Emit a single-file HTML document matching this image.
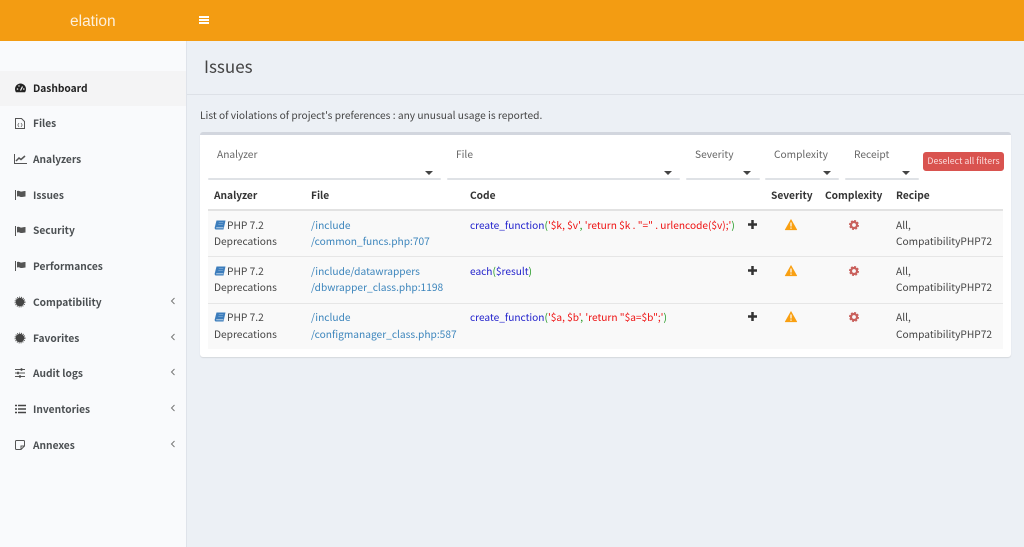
<!DOCTYPE html>
<html><head><meta charset="utf-8"><style>
html,body{margin:0;padding:0;width:1024px;height:547px;overflow:hidden;background:#ecf0f5;}
#o{position:absolute;left:0;top:0;width:1024px;height:547px;overflow:hidden;}
#w{position:absolute;left:0;top:0;width:1024px;height:547px;filter:blur(.35px);font-family:"Noto Sans CJK JP","Liberation Sans",sans-serif;font-size:10.2px;color:#444;}
.a{position:absolute;white-space:nowrap;line-height:16px;}
.b{position:absolute;}
.n{font-weight:700;color:#4b4f52;left:33px;}
.h{font-weight:700;color:#333;}
.l{color:#3c85bc;}
.g{color:#666;}
.c{font-size:10.15px;}
svg{position:absolute;overflow:visible;}
.sel{position:absolute;top:178px;height:2px;background:#dfe2e6;border-radius:2px;}
.car{position:absolute;top:171px;width:0;height:0;border-left:4px solid transparent;border-right:4px solid transparent;border-top:4px solid #444;}
.bl{color:#2222cc}.gr{color:#229922}.rd{color:#ee1111}
.rl{position:absolute;left:208px;width:795px;height:1px;background:#e6e6e6;}
</style></head><body><div id="o"><div id="w">
<div class="b" style="left:-2px;top:-2px;width:1028px;height:42.5px;background:#f39c12;"></div>
<div class="a" style="left:70px;top:13px;font-family:'Liberation Sans',sans-serif;font-size:15.5px;color:#fff;opacity:.85;line-height:18px;">elation</div>
<div class="b" style="left:199px;top:16px;width:10px;height:2px;background:#fff;"></div>
<div class="b" style="left:199px;top:19px;width:10px;height:2px;background:#fff;"></div>
<div class="b" style="left:199px;top:22px;width:10px;height:2px;background:#fff;"></div>

<div class="b" style="left:-2px;top:41px;width:188px;height:508px;background:#f9fafc;border-right:1px solid #dfe3ea;"></div>
<div class="b" style="left:-2px;top:71px;width:188px;height:35px;background:#f4f4f5;"></div>

<svg style="left:15px;top:83px" width="11" height="10" viewBox="0 0 11 10"><path d="M5.5 0.5C2.500 0.5 0 3 0 6c0 1.300.4 2.400 1 3.300h9c.6-.9 1-2 1-3.300C11 3 8.500.5 5.500.5z" fill="#222"/><path d="M5.500 7.500L7.500 3.500" stroke="#f4f4f5" stroke-width="1.200"/><circle cx="2.500" cy="6" r=".8" fill="#f4f4f5"/><circle cx="8.800" cy="6" r=".8" fill="#f4f4f5"/><circle cx="4" cy="3" r=".7" fill="#f4f4f5"/></svg>
<div class="a n" style="top:80px;color:#222;">Dashboard</div>

<svg style="left:15px;top:118px" width="10" height="11" viewBox="0 0 10 11"><path d="M.5.500h6l3 3v7h-9z" fill="none" stroke="#555" stroke-width="1"/><path d="M4 5L2.800 7 4 9M6 5l1.200 2L6 9" fill="none" stroke="#555" stroke-width=".7"/></svg>
<div class="a n" style="top:115px;">Files</div>

<svg style="left:14px;top:154px" width="13" height="10" viewBox="0 0 13 10"><path d="M.5 0v9.500H13" fill="none" stroke="#555"/><path d="M2 7l3-3 2 1.500L11 2" fill="none" stroke="#555" stroke-width="1.500"/></svg>
<div class="a n" style="top:151px;">Analyzers</div>

<svg style="left:15px;top:190px" width="11" height="10" viewBox="0 0 11 10"><path d="M.5 0v10" stroke="#555"/><path d="M2 1c2-1 3 1 5 .5 1.500-.3 2.500-.5 3.500-.5v5.500c-1.500 0-2 .5-3.500.5C5 7.300 4 5.500 2 6.500z" fill="#555"/></svg>
<div class="a n" style="top:187px;">Issues</div>

<svg style="left:15px;top:226px" width="11" height="10" viewBox="0 0 11 10"><path d="M.5 0v10" stroke="#555"/><path d="M2 1c2-1 3 1 5 .5 1.500-.3 2.500-.5 3.500-.5v5.500c-1.500 0-2 .5-3.500.5C5 7.300 4 5.500 2 6.500z" fill="#555"/></svg>
<div class="a n" style="top:222px;">Security</div>

<svg style="left:15px;top:261px" width="11" height="10" viewBox="0 0 11 10"><path d="M.5 0v10" stroke="#555"/><path d="M2 1c2-1 3 1 5 .5 1.500-.3 2.500-.5 3.500-.5v5.500c-1.500 0-2 .5-3.500.5C5 7.300 4 5.500 2 6.500z" fill="#555"/></svg>
<div class="a n" style="top:258px;">Performances</div>

<svg style="left:15px;top:297px" width="10" height="10" viewBox="0 0 10 10"><circle cx="5" cy="5" r="4.300" fill="#444"/><circle cx="5" cy="5" r="4.900" fill="none" stroke="#444" stroke-dasharray="1 1"/></svg>
<div class="a n" style="top:294px;">Compatibility</div>
<svg style="left:15px;top:333px" width="10" height="10" viewBox="0 0 10 10"><circle cx="5" cy="5" r="4.300" fill="#444"/><circle cx="5" cy="5" r="4.900" fill="none" stroke="#444" stroke-dasharray="1 1"/></svg>
<div class="a n" style="top:330px;">Favorites</div>

<svg style="left:15px;top:368px" width="10" height="10" viewBox="0 0 10 10"><path d="M0 1.500h10M0 5h10M0 8.500h10" stroke="#555"/><path d="M6.500.300v2.400M3 3.800v2.400M5 7.300v2.400" stroke="#444" stroke-width="1.600"/></svg>
<div class="a n" style="top:365px;">Audit logs</div>

<svg style="left:15px;top:404px" width="11" height="10" viewBox="0 0 11 10"><path d="M3 1.500h8M3 5h8M3 8.500h8" stroke="#444" stroke-width="1.500"/><path d="M0 1.500h2M0 5h2M0 8.500h2" stroke="#444" stroke-width="1.500"/></svg>
<div class="a n" style="top:401px;">Inventories</div>

<svg style="left:15px;top:440px" width="10" height="10" viewBox="0 0 10 10"><path d="M.5 1.500q0-1 1-1h7q1 0 1 1V6L6 9.500H1.500q-1 0-1-1z" fill="none" stroke="#555"/><path d="M6 9.500V6h3.500" fill="none" stroke="#555"/></svg>
<div class="a n" style="top:437px;">Annexes</div>

<svg style="left:170px;top:297px" width="6" height="8"><path d="M4.500 1L1.500 4l3 3" fill="none" stroke="#777"/></svg>
<svg style="left:170px;top:333px" width="6" height="8"><path d="M4.500 1L1.500 4l3 3" fill="none" stroke="#777"/></svg>
<svg style="left:170px;top:368px" width="6" height="8"><path d="M4.500 1L1.500 4l3 3" fill="none" stroke="#777"/></svg>
<svg style="left:170px;top:404px" width="6" height="8"><path d="M4.500 1L1.500 4l3 3" fill="none" stroke="#777"/></svg>
<svg style="left:170px;top:440px" width="6" height="8"><path d="M4.500 1L1.500 4l3 3" fill="none" stroke="#777"/></svg>

<div class="a" style="left:204px;top:53px;font-size:17px;line-height:26px;color:#444;">Issues</div>
<div class="b" style="left:187px;top:94px;width:839px;height:1px;background:#dde1e7;"></div>
<div class="a" style="left:200px;top:107px;color:#444;">List of violations of project's preferences : any unusual usage is reported.</div>

<div class="b" style="left:200px;top:132px;width:811px;height:225px;background:#fff;border-radius:3px;border-top:3px solid #d2d6de;box-sizing:border-box;box-shadow:0 1px 1px rgba(0,0,0,.1);"></div>

<div class="a g" style="left:217px;top:146px;">Analyzer</div>
<div class="a g" style="left:456px;top:146px;">File</div>
<div class="a g" style="left:695px;top:146px;">Severity</div>
<div class="a g" style="left:774px;top:146px;">Complexity</div>
<div class="a g" style="left:854px;top:146px;">Receipt</div>
<div class="sel" style="left:208px;width:233px;"></div><div class="car" style="left:425px;"></div>
<div class="sel" style="left:447px;width:233px;"></div><div class="car" style="left:664px;"></div>
<div class="sel" style="left:686px;width:74px;"></div><div class="car" style="left:743px;"></div>
<div class="sel" style="left:765px;width:74px;"></div><div class="car" style="left:823px;"></div>
<div class="sel" style="left:845px;width:74px;"></div><div class="car" style="left:902px;"></div>
<div class="a" style="left:923px;top:152px;width:81px;height:19px;background:#d9534f;border:1px solid #d9534f;border-radius:3px;box-sizing:border-box;color:#fbdcdc;font-size:8.8px;line-height:16px;text-align:center;">Deselect all filters</div>

<div class="a h" style="left:214px;top:187px;">Analyzer</div>
<div class="a h" style="left:311px;top:187px;">File</div>
<div class="a h" style="left:470px;top:187px;">Code</div>
<div class="a h" style="left:771px;top:187px;">Severity</div>
<div class="a h" style="left:825px;top:187px;">Complexity</div>
<div class="a h" style="left:896px;top:187px;">Recipe</div>

<div class="b" style="left:208px;top:209px;width:795px;height:2px;background:#e2e2e2;"></div>
<div class="b" style="left:208px;top:211px;width:795px;height:138px;background:#f9f9f9;"></div>
<div class="rl" style="top:256px;"></div>
<div class="rl" style="top:303px;"></div>

<!-- Row 1 -->
<svg style="left:214px;top:220px" width="12" height="10" viewBox="0 0 12 10"><path d="M2.500.5H11.500L9.500 9.500H2Q.5 9.500.7 7.500z" fill="#3c7dbc"/><path d="M2.200 7.800H9.400" stroke="#dbe8f3" stroke-width=".8"/><path d="M4.800 2.500h4.500M4.300 4.500h4.500" stroke="#9cc0e0" stroke-width=".6"/></svg>
<div class="a" style="left:227px;top:217px;">PHP 7.2</div>
<div class="a" style="left:214px;top:233px;">Deprecations</div>
<div class="a l" style="left:311px;top:217px;">/include</div>
<div class="a l" style="left:311px;top:233px;">/common_funcs.php:707</div>
<div class="a c" style="left:470px;top:217px;"><span class="bl">create_function</span><span class="gr">(</span><span class="rd">'$k, $v'</span><span class="gr">,</span> <span class="rd">'return $k . "=" . urlencode($v);'</span><span class="gr">)</span></div>
<svg style="left:748px;top:220px" width="9" height="9"><path d="M4.500 0v9M0 4.500h9" stroke="#333" stroke-width="2.500"/></svg>
<svg style="left:785px;top:219px" width="12" height="11" viewBox="0 0 12 11"><path d="M6 .500L11.800 10.800H.2z" fill="#f9a012" stroke="#f9a012" stroke-linejoin="round" stroke-width=".6"/><path d="M6 3.500v4M6 8.500v1.300" stroke="#fff" stroke-width="1.200"/></svg>
<svg style="left:849px;top:220px" width="10" height="10" viewBox="0 0 10 10"><circle cx="5" cy="5" r="3" fill="none" stroke="#c9605c" stroke-width="2.200"/><circle cx="5" cy="5" r="4.400" fill="none" stroke="#c9605c" stroke-width="1.200" stroke-dasharray="2 1.450"/></svg>
<div class="a" style="left:896px;top:217px;">All,</div>
<div class="a" style="left:896px;top:233px;">CompatibilityPHP72</div>

<!-- Row 2 -->
<svg style="left:214px;top:266px" width="12" height="10" viewBox="0 0 12 10"><path d="M2.500.5H11.500L9.500 9.500H2Q.5 9.500.7 7.500z" fill="#3c7dbc"/><path d="M2.200 7.800H9.400" stroke="#dbe8f3" stroke-width=".8"/><path d="M4.800 2.500h4.500M4.300 4.500h4.500" stroke="#9cc0e0" stroke-width=".6"/></svg>
<div class="a" style="left:227px;top:263px;">PHP 7.2</div>
<div class="a" style="left:214px;top:279px;">Deprecations</div>
<div class="a l" style="left:311px;top:263px;">/include/datawrappers</div>
<div class="a l" style="left:311px;top:279px;">/dbwrapper_class.php:1198</div>
<div class="a c" style="left:470px;top:263px;"><span class="bl">each</span><span class="gr">(</span><span class="bl">$result</span><span class="gr">)</span></div>
<svg style="left:748px;top:266px" width="9" height="9"><path d="M4.500 0v9M0 4.500h9" stroke="#333" stroke-width="2.500"/></svg>
<svg style="left:785px;top:265px" width="12" height="11" viewBox="0 0 12 11"><path d="M6 .500L11.800 10.800H.2z" fill="#f9a012" stroke="#f9a012" stroke-linejoin="round" stroke-width=".6"/><path d="M6 3.500v4M6 8.500v1.300" stroke="#fff" stroke-width="1.200"/></svg>
<svg style="left:849px;top:266px" width="10" height="10" viewBox="0 0 10 10"><circle cx="5" cy="5" r="3" fill="none" stroke="#c9605c" stroke-width="2.200"/><circle cx="5" cy="5" r="4.400" fill="none" stroke="#c9605c" stroke-width="1.200" stroke-dasharray="2 1.450"/></svg>
<div class="a" style="left:896px;top:263px;">All,</div>
<div class="a" style="left:896px;top:279px;">CompatibilityPHP72</div>

<!-- Row 3 -->
<svg style="left:214px;top:312px" width="12" height="10" viewBox="0 0 12 10"><path d="M2.500.5H11.500L9.500 9.500H2Q.5 9.500.7 7.500z" fill="#3c7dbc"/><path d="M2.200 7.800H9.400" stroke="#dbe8f3" stroke-width=".8"/><path d="M4.800 2.500h4.500M4.300 4.500h4.500" stroke="#9cc0e0" stroke-width=".6"/></svg>
<div class="a" style="left:227px;top:309px;">PHP 7.2</div>
<div class="a" style="left:214px;top:326px;">Deprecations</div>
<div class="a l" style="left:311px;top:309px;">/include</div>
<div class="a l" style="left:311px;top:326px;">/configmanager_class.php:587</div>
<div class="a c" style="left:470px;top:309px;"><span class="bl">create_function</span><span class="gr">(</span><span class="rd">'$a, $b'</span><span class="gr">,</span> <span class="rd">'return "$a=$b";'</span><span class="gr">)</span></div>
<svg style="left:748px;top:312px" width="9" height="9"><path d="M4.500 0v9M0 4.500h9" stroke="#333" stroke-width="2.500"/></svg>
<svg style="left:785px;top:311px" width="12" height="11" viewBox="0 0 12 11"><path d="M6 .500L11.800 10.800H.2z" fill="#f9a012" stroke="#f9a012" stroke-linejoin="round" stroke-width=".6"/><path d="M6 3.500v4M6 8.500v1.300" stroke="#fff" stroke-width="1.200"/></svg>
<svg style="left:849px;top:312px" width="10" height="10" viewBox="0 0 10 10"><circle cx="5" cy="5" r="3" fill="none" stroke="#c9605c" stroke-width="2.200"/><circle cx="5" cy="5" r="4.400" fill="none" stroke="#c9605c" stroke-width="1.200" stroke-dasharray="2 1.450"/></svg>
<div class="a" style="left:896px;top:309px;">All,</div>
<div class="a" style="left:896px;top:326px;">CompatibilityPHP72</div>
</div></div></body></html>
